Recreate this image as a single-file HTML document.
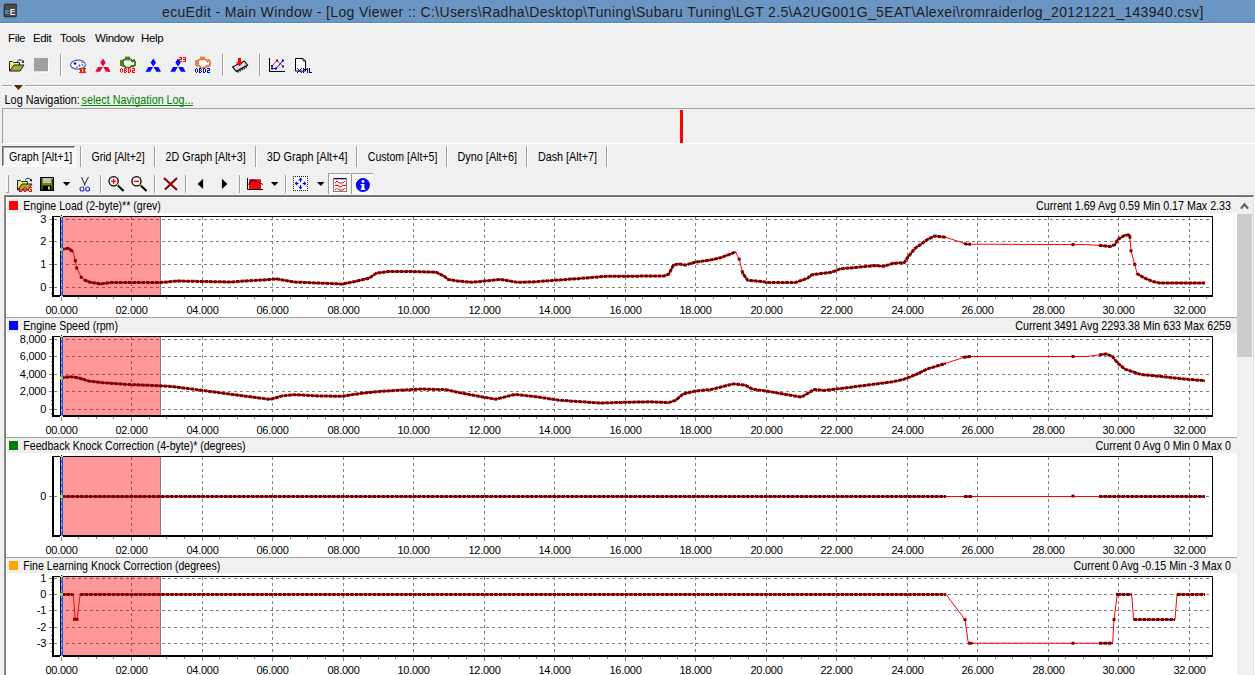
<!DOCTYPE html>
<html><head><meta charset="utf-8"><style>
html,body{margin:0;padding:0;}
body{width:1255px;height:675px;overflow:hidden;position:relative;background:#f0f0f0;font-family:"Liberation Sans", sans-serif;}
</style></head><body>
<div style="position:absolute;left:0;top:0;width:1255px;height:22px;background:#6b96c3;border-bottom:1px solid #5d86b3"></div>
<div style="position:absolute;left:0;top:23px;width:1255px;height:1px;background:#fafafa"></div>
<svg style="position:absolute;left:3px;top:3px" width="15" height="16" viewBox="0 0 15 16">
<rect x="1" y="1" width="12.5" height="13" rx="1" fill="#3c3c3c" stroke="#222" stroke-width="0.6"/>
<rect x="2" y="2" width="10.5" height="11" fill="#4a4a4a"/>
<text x="2" y="11" font-family="Liberation Sans" font-size="7.5" font-weight="bold" fill="#5ab0e0">e</text>
<text x="6.8" y="11.5" font-family="Liberation Sans" font-size="8.5" font-weight="bold" fill="#e8e8e8">E</text>
</svg>
<div style="position:absolute;left:162px;top:4px;font-size:14px;line-height:16px;white-space:nowrap;color:#1e1e1e;letter-spacing:0.35px;">ecuEdit - Main Window - [Log Viewer :: C:\Users\Radha\Desktop\Tuning\Subaru Tuning\LGT 2.5\A2UG001G_5EAT\Alexei\romraiderlog_20121221_143940.csv]</div>
<div style="position:absolute;left:8px;top:32px;font-size:11.5px;line-height:13px;white-space:nowrap;color:#000;letter-spacing:-0.35px;">File</div>
<div style="position:absolute;left:33px;top:32px;font-size:11.5px;line-height:13px;white-space:nowrap;color:#000;letter-spacing:-0.35px;">Edit</div>
<div style="position:absolute;left:60px;top:32px;font-size:11.5px;line-height:13px;white-space:nowrap;color:#000;letter-spacing:-0.35px;">Tools</div>
<div style="position:absolute;left:95px;top:32px;font-size:11.5px;line-height:13px;white-space:nowrap;color:#000;letter-spacing:-0.35px;">Window</div>
<div style="position:absolute;left:141px;top:32px;font-size:11.5px;line-height:13px;white-space:nowrap;color:#000;letter-spacing:-0.35px;">Help</div>
<svg style="position:absolute;left:0;top:0" width="1255" height="200" viewBox="0 0 1255 200">
<path d="M9.5,71 L9.5,61.5 L12.5,61.5 L13.5,62.5 L19.5,62.5 L19.5,65" fill="#ffff80" stroke="#202020" stroke-width="1"/><polygon points="10,71 10,63 19,63 19,65 14,65" fill="#f0f070"/><polygon points="9.5,71 14,65 24,65 20,71" fill="#a8a838" stroke="#202020" stroke-width="1"/>
<path d="M17,61.5 Q20,58 23,61.5" fill="none" stroke="#202020" stroke-width="1"/><polygon points="21.3,62.5 24,63 23.8,60" fill="#202020"/>
<rect x="34" y="58" width="14" height="13.5" fill="#a0a0a0"/><path d="M34.5,72 L48.5,72 L48.5,58" fill="none" stroke="#fff" stroke-width="1"/>
<rect x="60" y="54" width="1" height="22" fill="#a0a0a0"/><rect x="61" y="54" width="1" height="22" fill="#ffffff"/>
<ellipse cx="78" cy="64.7" rx="7.4" ry="4.5" fill="#fff" stroke="#4858d0" stroke-width="1.2"/>
<circle cx="75" cy="63.5" r="1.3" fill="#101870"/><circle cx="79.5" cy="65.5" r="0.9" fill="#1828a0"/><circle cx="82.5" cy="65" r="0.8" fill="#1828a0"/><circle cx="77" cy="67" r="0.8" fill="#1828a0"/><circle cx="82" cy="62.5" r="0.7" fill="#4050c0"/>
<rect x="79" y="68" width="7" height="1.2" fill="#ff1800"/><rect x="79" y="71.8" width="7" height="1.2" fill="#ff1800"/><rect x="80" y="68" width="2" height="5" fill="#ff1800"/><rect x="83.2" y="68" width="2" height="5" fill="#ff1800"/>
<polygon points="103,58.5 105.7,62.5 103,66.5 100.3,62.5" fill="#e8003c"/><polygon points="98,67.1 102.7,67.1 100,71.8 95.3,71.8" fill="#e8003c"/><polygon points="108,67.1 103.3,67.1 106,71.8 110.7,71.8" fill="#e8003c"/>
<path d="M123.5,61 L131,60.5 L132.5,62 L134.5,62 L134.5,65 L132,65.5 L130,67 L126,67 L124.5,65.5 L123.5,65.5 Z" fill="#fff"/><path d="M121,60 L121,66 M121,63 L123,63 M123,60.5 L124.5,59.5 L131,59.5 L132.5,61.5 L134,60 L135,62 L135,65 L133,66.5 L132,65.8 L130,67.5 L126,67.5 L124.5,66 L123,66 Z M125,57.6 L130,57.6 M127.5,57.6 L127.5,59.5" fill="none" stroke="#004400" stroke-width="1.6"/><path d="M121,60 L121,66 M121,63 L123,63 M123,60.5 L124.5,59.5 L131,59.5 L132.5,61.5 L134,60 L135,62 L135,65 L133,66.5 L132,65.8 L130,67.5 L126,67.5 L124.5,66 L123,66 Z M125,57.6 L130,57.6 M127.5,57.6 L127.5,59.5" fill="none" stroke="#80e000" stroke-width="0.5"/>
<rect x="121.00" y="68.00" width="1.00" height="1" fill="#ff0000"/><rect x="120.00" y="69.00" width="1.00" height="1" fill="#ff0000"/><rect x="122.00" y="69.00" width="1.00" height="1" fill="#ff0000"/><rect x="120.00" y="70.00" width="1.00" height="1" fill="#ff0000"/><rect x="122.00" y="70.00" width="1.00" height="1" fill="#ff0000"/><rect x="120.00" y="71.00" width="1.00" height="1" fill="#ff0000"/><rect x="122.00" y="71.00" width="1.00" height="1" fill="#ff0000"/><rect x="121.00" y="72.00" width="1.00" height="1" fill="#ff0000"/><rect x="124.00" y="68.00" width="1.00" height="1" fill="#ff0000"/><rect x="125.00" y="68.00" width="1.00" height="1" fill="#ff0000"/><rect x="124.00" y="69.00" width="1.00" height="1" fill="#ff0000"/><rect x="126.00" y="69.00" width="1.00" height="1" fill="#ff0000"/><rect x="124.00" y="70.00" width="1.00" height="1" fill="#ff0000"/><rect x="125.00" y="70.00" width="1.00" height="1" fill="#ff0000"/><rect x="124.00" y="71.00" width="1.00" height="1" fill="#ff0000"/><rect x="126.00" y="71.00" width="1.00" height="1" fill="#ff0000"/><rect x="124.00" y="72.00" width="1.00" height="1" fill="#ff0000"/><rect x="125.00" y="72.00" width="1.00" height="1" fill="#ff0000"/><rect x="128.00" y="68.00" width="1.00" height="1" fill="#ff0000"/><rect x="129.00" y="68.00" width="1.00" height="1" fill="#ff0000"/><rect x="128.00" y="69.00" width="1.00" height="1" fill="#ff0000"/><rect x="130.00" y="69.00" width="1.00" height="1" fill="#ff0000"/><rect x="128.00" y="70.00" width="1.00" height="1" fill="#ff0000"/><rect x="130.00" y="70.00" width="1.00" height="1" fill="#ff0000"/><rect x="128.00" y="71.00" width="1.00" height="1" fill="#ff0000"/><rect x="130.00" y="71.00" width="1.00" height="1" fill="#ff0000"/><rect x="128.00" y="72.00" width="1.00" height="1" fill="#ff0000"/><rect x="129.00" y="72.00" width="1.00" height="1" fill="#ff0000"/><rect x="132.00" y="68.00" width="1.00" height="1" fill="#ff0000"/><rect x="133.00" y="68.00" width="1.00" height="1" fill="#ff0000"/><rect x="134.00" y="68.00" width="1.00" height="1" fill="#ff0000"/><rect x="134.00" y="69.00" width="1.00" height="1" fill="#ff0000"/><rect x="132.00" y="70.00" width="1.00" height="1" fill="#ff0000"/><rect x="133.00" y="70.00" width="1.00" height="1" fill="#ff0000"/><rect x="134.00" y="70.00" width="1.00" height="1" fill="#ff0000"/><rect x="132.00" y="71.00" width="1.00" height="1" fill="#ff0000"/><rect x="132.00" y="72.00" width="1.00" height="1" fill="#ff0000"/><rect x="133.00" y="72.00" width="1.00" height="1" fill="#ff0000"/><rect x="134.00" y="72.00" width="1.00" height="1" fill="#ff0000"/>
<polygon points="153.3,58.5 156.0,62.5 153.3,66.5 150.60000000000002,62.5" fill="#0000ff"/><polygon points="148.3,67.1 153.0,67.1 150.3,71.8 145.60000000000002,71.8" fill="#0000ff"/><polygon points="158.3,67.1 153.60000000000002,67.1 156.3,71.8 161.0,71.8" fill="#0000ff"/>
<polygon points="178,58.5 180.7,62.5 178,66.5 175.3,62.5" fill="#0000ff"/><polygon points="173,67.1 177.7,67.1 175,71.8 170.3,71.8" fill="#0000ff"/><polygon points="183,67.1 178.3,67.1 181,71.8 185.7,71.8" fill="#0000ff"/>
<rect x="179.00" y="57.00" width="1.00" height="1" fill="#ff0000"/><rect x="180.00" y="57.00" width="1.00" height="1" fill="#ff0000"/><rect x="181.00" y="57.00" width="1.00" height="1" fill="#ff0000"/><rect x="181.00" y="58.00" width="1.00" height="1" fill="#ff0000"/><rect x="179.00" y="59.00" width="1.00" height="1" fill="#ff0000"/><rect x="180.00" y="59.00" width="1.00" height="1" fill="#ff0000"/><rect x="181.00" y="59.00" width="1.00" height="1" fill="#ff0000"/><rect x="179.00" y="60.00" width="1.00" height="1" fill="#ff0000"/><rect x="179.00" y="61.00" width="1.00" height="1" fill="#ff0000"/><rect x="180.00" y="61.00" width="1.00" height="1" fill="#ff0000"/><rect x="181.00" y="61.00" width="1.00" height="1" fill="#ff0000"/><rect x="183.00" y="57.00" width="1.00" height="1" fill="#ff0000"/><rect x="184.00" y="57.00" width="1.00" height="1" fill="#ff0000"/><rect x="185.00" y="57.00" width="1.00" height="1" fill="#ff0000"/><rect x="185.00" y="58.00" width="1.00" height="1" fill="#ff0000"/><rect x="183.00" y="59.00" width="1.00" height="1" fill="#ff0000"/><rect x="184.00" y="59.00" width="1.00" height="1" fill="#ff0000"/><rect x="185.00" y="59.00" width="1.00" height="1" fill="#ff0000"/><rect x="185.00" y="60.00" width="1.00" height="1" fill="#ff0000"/><rect x="183.00" y="61.00" width="1.00" height="1" fill="#ff0000"/><rect x="184.00" y="61.00" width="1.00" height="1" fill="#ff0000"/><rect x="185.00" y="61.00" width="1.00" height="1" fill="#ff0000"/>
<path d="M198.5,61 L206,60.5 L207.5,62 L209.5,62 L209.5,65 L207,65.5 L205,67 L201,67 L199.5,65.5 L198.5,65.5 Z" fill="#fff"/><path d="M196,60 L196,66 M196,63 L198,63 M198,60.5 L199.5,59.5 L206,59.5 L207.5,61.5 L209,60 L210,62 L210,65 L208,66.5 L207,65.8 L205,67.5 L201,67.5 L199.5,66 L198,66 Z M200,57.6 L205,57.6 M202.5,57.6 L202.5,59.5" fill="none" stroke="#e06838" stroke-width="1.6"/><path d="M196,60 L196,66 M196,63 L198,63 M198,60.5 L199.5,59.5 L206,59.5 L207.5,61.5 L209,60 L210,62 L210,65 L208,66.5 L207,65.8 L205,67.5 L201,67.5 L199.5,66 L198,66 Z M200,57.6 L205,57.6 M202.5,57.6 L202.5,59.5" fill="none" stroke="#e88050" stroke-width="0.5"/>
<rect x="196.00" y="68.00" width="1.00" height="1" fill="#0000ff"/><rect x="195.00" y="69.00" width="1.00" height="1" fill="#0000ff"/><rect x="197.00" y="69.00" width="1.00" height="1" fill="#0000ff"/><rect x="195.00" y="70.00" width="1.00" height="1" fill="#0000ff"/><rect x="197.00" y="70.00" width="1.00" height="1" fill="#0000ff"/><rect x="195.00" y="71.00" width="1.00" height="1" fill="#0000ff"/><rect x="197.00" y="71.00" width="1.00" height="1" fill="#0000ff"/><rect x="196.00" y="72.00" width="1.00" height="1" fill="#0000ff"/><rect x="199.00" y="68.00" width="1.00" height="1" fill="#0000ff"/><rect x="200.00" y="68.00" width="1.00" height="1" fill="#0000ff"/><rect x="199.00" y="69.00" width="1.00" height="1" fill="#0000ff"/><rect x="201.00" y="69.00" width="1.00" height="1" fill="#0000ff"/><rect x="199.00" y="70.00" width="1.00" height="1" fill="#0000ff"/><rect x="200.00" y="70.00" width="1.00" height="1" fill="#0000ff"/><rect x="199.00" y="71.00" width="1.00" height="1" fill="#0000ff"/><rect x="201.00" y="71.00" width="1.00" height="1" fill="#0000ff"/><rect x="199.00" y="72.00" width="1.00" height="1" fill="#0000ff"/><rect x="200.00" y="72.00" width="1.00" height="1" fill="#0000ff"/><rect x="203.00" y="68.00" width="1.00" height="1" fill="#0000ff"/><rect x="204.00" y="68.00" width="1.00" height="1" fill="#0000ff"/><rect x="203.00" y="69.00" width="1.00" height="1" fill="#0000ff"/><rect x="205.00" y="69.00" width="1.00" height="1" fill="#0000ff"/><rect x="203.00" y="70.00" width="1.00" height="1" fill="#0000ff"/><rect x="205.00" y="70.00" width="1.00" height="1" fill="#0000ff"/><rect x="203.00" y="71.00" width="1.00" height="1" fill="#0000ff"/><rect x="205.00" y="71.00" width="1.00" height="1" fill="#0000ff"/><rect x="203.00" y="72.00" width="1.00" height="1" fill="#0000ff"/><rect x="204.00" y="72.00" width="1.00" height="1" fill="#0000ff"/><rect x="207.00" y="68.00" width="1.00" height="1" fill="#0000ff"/><rect x="208.00" y="68.00" width="1.00" height="1" fill="#0000ff"/><rect x="209.00" y="68.00" width="1.00" height="1" fill="#0000ff"/><rect x="209.00" y="69.00" width="1.00" height="1" fill="#0000ff"/><rect x="207.00" y="70.00" width="1.00" height="1" fill="#0000ff"/><rect x="208.00" y="70.00" width="1.00" height="1" fill="#0000ff"/><rect x="209.00" y="70.00" width="1.00" height="1" fill="#0000ff"/><rect x="207.00" y="71.00" width="1.00" height="1" fill="#0000ff"/><rect x="207.00" y="72.00" width="1.00" height="1" fill="#0000ff"/><rect x="208.00" y="72.00" width="1.00" height="1" fill="#0000ff"/><rect x="209.00" y="72.00" width="1.00" height="1" fill="#0000ff"/>
<rect x="222" y="54" width="1" height="22" fill="#a0a0a0"/><rect x="223" y="54" width="1" height="22" fill="#ffffff"/>
<polygon points="232.5,67 244.2,61.2 247.6,65 236.4,71.5" fill="#c0c0c0" stroke="#000" stroke-width="1.1"/>
<polygon points="234,67 244,62 246,64.5 237,69.5" fill="#e0e0e0"/>
<path d="M238,70.6 l0.3,2" stroke="#000" stroke-width="1.1"/><path d="M240,69.5 l0.3,2" stroke="#000" stroke-width="1.1"/><path d="M242,68.39999999999999 l0.3,2" stroke="#000" stroke-width="1.1"/><path d="M244,67.3 l0.3,2" stroke="#000" stroke-width="1.1"/><path d="M246,66.19999999999999 l0.3,2" stroke="#000" stroke-width="1.1"/>
<polygon points="238,58 241,58 241,62.5 243.2,62.5 239.5,66.3 235.8,62.5 238,62.5" fill="#ff0000"/>
<rect x="259" y="54" width="1" height="22" fill="#a0a0a0"/><rect x="260" y="54" width="1" height="22" fill="#ffffff"/>
<path d="M269.5,58 V71.5 H285" fill="none" stroke="#000" stroke-width="1"/>
<polyline points="272,66 277,60.5 283,66.5" fill="none" stroke="#800080" stroke-width="0.8"/><rect x="271" y="65" width="2" height="2" fill="#800000"/><rect x="276" y="59.5" width="2" height="2" fill="#800000"/><rect x="282" y="65.5" width="2" height="2" fill="#800000"/>
<polyline points="272,68.5 276,68.5 283,60.5" fill="none" stroke="#0000ff" stroke-width="1"/><rect x="271" y="67.5" width="2" height="2" fill="#0000ff"/><rect x="275" y="67.5" width="2" height="2" fill="#0000ff"/><rect x="282" y="59.5" width="2" height="2" fill="#0000ff"/>
<path d="M295.5,58.5 H303 L305.5,61 V71 H295.5 Z" fill="#fff" stroke="#000" stroke-width="1"/><path d="M303,58.5 V61 H305.5" fill="none" stroke="#000" stroke-width="0.8"/>
<rect x="297.00" y="68.00" width="1.00" height="1" fill="#000090"/><rect x="301.00" y="68.00" width="1.00" height="1" fill="#000090"/><rect x="298.00" y="69.00" width="1.00" height="1" fill="#000090"/><rect x="300.00" y="69.00" width="1.00" height="1" fill="#000090"/><rect x="299.00" y="70.00" width="1.00" height="1" fill="#000090"/><rect x="298.00" y="71.00" width="1.00" height="1" fill="#000090"/><rect x="300.00" y="71.00" width="1.00" height="1" fill="#000090"/><rect x="297.00" y="72.00" width="1.00" height="1" fill="#000090"/><rect x="301.00" y="72.00" width="1.00" height="1" fill="#000090"/><rect x="303.00" y="68.00" width="1.00" height="1" fill="#000090"/><rect x="307.00" y="68.00" width="1.00" height="1" fill="#000090"/><rect x="303.00" y="69.00" width="1.00" height="1" fill="#000090"/><rect x="304.00" y="69.00" width="1.00" height="1" fill="#000090"/><rect x="306.00" y="69.00" width="1.00" height="1" fill="#000090"/><rect x="307.00" y="69.00" width="1.00" height="1" fill="#000090"/><rect x="303.00" y="70.00" width="1.00" height="1" fill="#000090"/><rect x="305.00" y="70.00" width="1.00" height="1" fill="#000090"/><rect x="307.00" y="70.00" width="1.00" height="1" fill="#000090"/><rect x="303.00" y="71.00" width="1.00" height="1" fill="#000090"/><rect x="307.00" y="71.00" width="1.00" height="1" fill="#000090"/><rect x="303.00" y="72.00" width="1.00" height="1" fill="#000090"/><rect x="307.00" y="72.00" width="1.00" height="1" fill="#000090"/><rect x="309.00" y="68.00" width="1.00" height="1" fill="#000090"/><rect x="309.00" y="69.00" width="1.00" height="1" fill="#000090"/><rect x="309.00" y="70.00" width="1.00" height="1" fill="#000090"/><rect x="309.00" y="71.00" width="1.00" height="1" fill="#000090"/><rect x="309.00" y="72.00" width="1.00" height="1" fill="#000090"/><rect x="310.00" y="72.00" width="1.00" height="1" fill="#000090"/><rect x="311.00" y="72.00" width="1.00" height="1" fill="#000090"/>
<rect x="2" y="85" width="10" height="1" fill="#a0a0a0"/><rect x="2" y="86" width="10" height="1" fill="#fff"/>
<rect x="25" y="85" width="1230" height="1" fill="#a0a0a0"/><rect x="25" y="86" width="1230" height="1" fill="#fff"/>
<polygon points="13.8,85 23,85 18.4,90" fill="#6a1e00"/>
<rect x="2" y="108" width="1253" height="1" fill="#a0a0a0"/><rect x="2" y="108" width="1" height="35" fill="#a0a0a0"/><rect x="2" y="143" width="1253" height="1" fill="#ffffff"/>
<rect x="680" y="110" width="3" height="33" fill="#ff0000"/>
<defs><pattern id="dith" width="2" height="2" patternUnits="userSpaceOnUse"><rect width="2" height="2" fill="#ffffff"/><rect width="1" height="1" fill="#f0f0f0"/><rect x="1" y="1" width="1" height="1" fill="#f0f0f0"/></pattern></defs>
<rect x="2" y="146" width="73" height="20" fill="url(#dith)"/>
<rect x="2" y="146" width="73" height="1" fill="#696969"/><rect x="2" y="147" width="72" height="1" fill="#a0a0a0"/><rect x="2" y="146" width="1" height="20" fill="#696969"/><rect x="3" y="147" width="1" height="18" fill="#a0a0a0"/><rect x="2" y="166" width="74" height="1" fill="#fff"/><rect x="75" y="146" width="1" height="21" fill="#fff"/>
<rect x="80" y="146" width="1" height="21" fill="#a0a0a0"/><rect x="81" y="146" width="1" height="21" fill="#fff"/>
<rect x="154" y="146" width="1" height="21" fill="#a0a0a0"/><rect x="155" y="146" width="1" height="21" fill="#fff"/>
<rect x="255" y="146" width="1" height="21" fill="#a0a0a0"/><rect x="256" y="146" width="1" height="21" fill="#fff"/>
<rect x="356" y="146" width="1" height="21" fill="#a0a0a0"/><rect x="357" y="146" width="1" height="21" fill="#fff"/>
<rect x="446" y="146" width="1" height="21" fill="#a0a0a0"/><rect x="447" y="146" width="1" height="21" fill="#fff"/>
<rect x="526" y="146" width="1" height="21" fill="#a0a0a0"/><rect x="527" y="146" width="1" height="21" fill="#fff"/>
<rect x="606" y="146" width="1" height="21" fill="#a0a0a0"/><rect x="607" y="146" width="1" height="21" fill="#fff"/>
<rect x="6" y="175" width="1" height="18" fill="#fff"/><rect x="8" y="175" width="1" height="18" fill="#a0a0a0"/><rect x="6" y="192" width="3" height="1" fill="#a0a0a0"/>
<path d="M17.5,190 L17.5,180.5 L20.5,180.5 L21.5,181.5 L27.5,181.5 L27.5,184" fill="#ffff80" stroke="#202020" stroke-width="1"/><polygon points="18,190 18,182 27,182 27,184 22,184" fill="#f0f070"/><polygon points="17.5,190 22,184 32,184 28,190" fill="#a8a838" stroke="#202020" stroke-width="1"/>
<path d="M25,180.0 Q28,176.5 31,180.0" fill="none" stroke="#202020" stroke-width="1"/><polygon points="29.3,181.0 32,181.5 31.8,178.5" fill="#202020"/>
<rect x="19.00" y="187.00" width="1.00" height="1" fill="#ff0000"/><rect x="19.00" y="188.00" width="1.00" height="1" fill="#ff0000"/><rect x="19.00" y="189.00" width="1.00" height="1" fill="#ff0000"/><rect x="19.00" y="190.00" width="1.00" height="1" fill="#ff0000"/><rect x="19.00" y="191.00" width="1.00" height="1" fill="#ff0000"/><rect x="20.00" y="191.00" width="1.00" height="1" fill="#ff0000"/><rect x="21.00" y="191.00" width="1.00" height="1" fill="#ff0000"/><rect x="24.00" y="187.00" width="1.00" height="1" fill="#ff0000"/><rect x="25.00" y="187.00" width="1.00" height="1" fill="#ff0000"/><rect x="23.00" y="188.00" width="1.00" height="1" fill="#ff0000"/><rect x="26.00" y="188.00" width="1.00" height="1" fill="#ff0000"/><rect x="23.00" y="189.00" width="1.00" height="1" fill="#ff0000"/><rect x="26.00" y="189.00" width="1.00" height="1" fill="#ff0000"/><rect x="23.00" y="190.00" width="1.00" height="1" fill="#ff0000"/><rect x="26.00" y="190.00" width="1.00" height="1" fill="#ff0000"/><rect x="24.00" y="191.00" width="1.00" height="1" fill="#ff0000"/><rect x="25.00" y="191.00" width="1.00" height="1" fill="#ff0000"/><rect x="29.00" y="187.00" width="1.00" height="1" fill="#ff0000"/><rect x="30.00" y="187.00" width="1.00" height="1" fill="#ff0000"/><rect x="31.00" y="187.00" width="1.00" height="1" fill="#ff0000"/><rect x="28.00" y="188.00" width="1.00" height="1" fill="#ff0000"/><rect x="28.00" y="189.00" width="1.00" height="1" fill="#ff0000"/><rect x="30.00" y="189.00" width="1.00" height="1" fill="#ff0000"/><rect x="31.00" y="189.00" width="1.00" height="1" fill="#ff0000"/><rect x="28.00" y="190.00" width="1.00" height="1" fill="#ff0000"/><rect x="31.00" y="190.00" width="1.00" height="1" fill="#ff0000"/><rect x="29.00" y="191.00" width="1.00" height="1" fill="#ff0000"/><rect x="30.00" y="191.00" width="1.00" height="1" fill="#ff0000"/><rect x="31.00" y="191.00" width="1.00" height="1" fill="#ff0000"/>
<rect x="40" y="177" width="14" height="14" fill="#000"/><rect x="41.5" y="178" width="11" height="12" fill="#808000"/><rect x="43" y="178" width="8" height="5" fill="#c0c0c0"/><rect x="42.5" y="185.5" width="9" height="5" fill="#000"/><rect x="48" y="186.5" width="2" height="3" fill="#c0c0c0"/><rect x="52" y="178" width="1" height="1" fill="#c0c0c0"/>
<polygon points="62.8,182 70.3,182 66.55,186" fill="#000"/>
<path d="M81.5,177 L85,185.5 M88.5,177 L84,185.5" stroke="#202020" stroke-width="1" fill="none"/><circle cx="82" cy="189" r="2" fill="none" stroke="#3030d0" stroke-width="1.1"/><circle cx="87.6" cy="189" r="2" fill="none" stroke="#3030d0" stroke-width="1.1"/>
<rect x="100" y="175" width="1" height="18" fill="#a0a0a0"/><rect x="101" y="175" width="1" height="18" fill="#ffffff"/>
<circle cx="113.6" cy="181.3" r="4.6" fill="#f4f4f4" stroke="#000" stroke-width="1.3"/>
<path d="M116.8,184.5 L123.6,191.0" stroke="#000" stroke-width="2"/>
<path d="M116.8,184.5 L118.0,185.70000000000002" stroke="#e0e000" stroke-width="1.4"/>
<rect x="111.1" y="180.7" width="5" height="1.3" fill="#ff0000"/>
<rect x="112.94999999999999" y="178.8" width="1.3" height="5" fill="#ff0000"/>
<circle cx="136.5" cy="181.3" r="4.6" fill="#f4f4f4" stroke="#000" stroke-width="1.3"/>
<path d="M139.7,184.5 L146.5,191.0" stroke="#000" stroke-width="2"/>
<path d="M139.7,184.5 L140.9,185.70000000000002" stroke="#e0e000" stroke-width="1.4"/>
<rect x="134.0" y="180.7" width="5" height="1.3" fill="#ff0000"/>
<rect x="154" y="175" width="1" height="18" fill="#a0a0a0"/><rect x="155" y="175" width="1" height="18" fill="#ffffff"/>
<path d="M164,178 L177,190 M177,178 L165,189.5" stroke="#800000" stroke-width="2"/>
<rect x="185" y="175" width="1" height="18" fill="#a0a0a0"/><rect x="186" y="175" width="1" height="18" fill="#ffffff"/>
<polygon points="197.6,184 203.1,178.8 203.1,189.1" fill="#000"/><polygon points="221.9,178.8 221.9,189.1 227.4,184" fill="#000"/>
<rect x="239" y="175" width="1" height="18" fill="#a0a0a0"/><rect x="240" y="175" width="1" height="18" fill="#ffffff"/>
<rect x="248" y="178" width="15" height="11.5" fill="#fff"/><rect x="249" y="179.2" width="12" height="10" fill="#ff0000"/><path d="M247.5,178 V189.5 H263" fill="none" stroke="#000" stroke-width="1"/><polyline points="248,184.5 250,183 252,180 254,180 257,182 260,183 263,184.5" fill="none" stroke="#000080" stroke-width="1"/>
<polygon points="270.9,182 278.4,182 274.65,186" fill="#000"/>
<rect x="285" y="175" width="1" height="18" fill="#a0a0a0"/><rect x="286" y="175" width="1" height="18" fill="#ffffff"/>
<rect x="294" y="177" width="13" height="13" fill="#fff"/>
<rect x="293" y="176" width="1" height="1" fill="#202020"/><rect x="293" y="190" width="1" height="1" fill="#202020"/><rect x="293" y="176" width="1" height="1" fill="#202020"/><rect x="307" y="176" width="1" height="1" fill="#202020"/>
<rect x="295" y="176" width="1" height="1" fill="#202020"/><rect x="295" y="190" width="1" height="1" fill="#202020"/><rect x="293" y="178" width="1" height="1" fill="#202020"/><rect x="307" y="178" width="1" height="1" fill="#202020"/>
<rect x="297" y="176" width="1" height="1" fill="#202020"/><rect x="297" y="190" width="1" height="1" fill="#202020"/><rect x="293" y="180" width="1" height="1" fill="#202020"/><rect x="307" y="180" width="1" height="1" fill="#202020"/>
<rect x="299" y="176" width="1" height="1" fill="#202020"/><rect x="299" y="190" width="1" height="1" fill="#202020"/><rect x="293" y="182" width="1" height="1" fill="#202020"/><rect x="307" y="182" width="1" height="1" fill="#202020"/>
<rect x="301" y="176" width="1" height="1" fill="#202020"/><rect x="301" y="190" width="1" height="1" fill="#202020"/><rect x="293" y="184" width="1" height="1" fill="#202020"/><rect x="307" y="184" width="1" height="1" fill="#202020"/>
<rect x="303" y="176" width="1" height="1" fill="#202020"/><rect x="303" y="190" width="1" height="1" fill="#202020"/><rect x="293" y="186" width="1" height="1" fill="#202020"/><rect x="307" y="186" width="1" height="1" fill="#202020"/>
<rect x="305" y="176" width="1" height="1" fill="#202020"/><rect x="305" y="190" width="1" height="1" fill="#202020"/><rect x="293" y="188" width="1" height="1" fill="#202020"/><rect x="307" y="188" width="1" height="1" fill="#202020"/>
<rect x="307" y="176" width="1" height="1" fill="#202020"/><rect x="307" y="190" width="1" height="1" fill="#202020"/><rect x="293" y="190" width="1" height="1" fill="#202020"/><rect x="307" y="190" width="1" height="1" fill="#202020"/>
<path d="M300.5,179.5 V182 M300.5,185 V187.5 M296,183.5 H298.5 M302.5,183.5 H305" stroke="#0000ff" stroke-width="1"/>
<polygon points="298.3,180.2 300.5,177.6 302.7,180.2" fill="#0000ff"/><polygon points="298.3,186.8 300.5,189.4 302.7,186.8" fill="#0000ff"/><polygon points="297.2,181.3 294.6,183.5 297.2,185.7" fill="#0000ff"/><polygon points="303.8,181.3 306.4,183.5 303.8,185.7" fill="#0000ff"/>
<polygon points="317,182 324.5,182 320.75,186" fill="#000"/>
<rect x="328" y="173" width="22" height="21" fill="url(#dith)"/><rect x="328" y="173" width="22" height="1" fill="#a0a0a0"/><rect x="328" y="173" width="1" height="21" fill="#a0a0a0"/>
<rect x="351" y="173" width="22" height="21" fill="url(#dith)"/><rect x="351" y="173" width="22" height="1" fill="#a0a0a0"/><rect x="351" y="173" width="1" height="21" fill="#a0a0a0"/>
<rect x="333.5" y="178.5" width="13" height="13" fill="#fff" stroke="#808080" stroke-width="1"/><rect x="334" y="178" width="12" height="1.3" fill="#000080"/>
<polyline points="335,183 337,181 339,183 343,183 345,181" fill="none" stroke="#ff0000" stroke-width="1"/><polyline points="335,185.5 338,185.5 340,187 343,185.5 346,185.5" fill="none" stroke="#ff0000" stroke-width="1"/><polyline points="335,190 337,188 339,190 343,190 345,188" fill="none" stroke="#ff0000" stroke-width="1"/>
<path d="M335,184.2 H346 M335,188.7 H346" stroke="#c0c0c0" stroke-width="0.6"/>
<circle cx="362.9" cy="185.1" r="7" fill="#0000ff"/><rect x="361.6" y="184" width="2.8" height="5.5" fill="#fff"/><rect x="360.6" y="184" width="2" height="1" fill="#fff"/><rect x="360.6" y="188.6" width="4.8" height="1.2" fill="#fff"/><circle cx="363" cy="181.5" r="1.4" fill="#fff"/>
</svg>
<svg style="position:absolute;left:0;top:0" width="1255" height="200" viewBox="0 0 1255 200" font-family="Liberation Sans, sans-serif">
<text transform="translate(4.6,104) scale(0.904,1)" font-size="12">Log Navigation:</text>
<text transform="translate(81.5,104) scale(0.899,1)" font-size="12" fill="#008000">select Navigation Log...</text>
<rect x="81" y="105" width="112" height="1" fill="#008000"/>
<text transform="translate(9.0,161) scale(0.893,1)" font-size="12">Graph [Alt+1]</text>
<text transform="translate(91.5,161) scale(0.881,1)" font-size="12">Grid [Alt+2]</text>
<text transform="translate(165.6,161) scale(0.895,1)" font-size="12">2D Graph [Alt+3]</text>
<text transform="translate(266.7,161) scale(0.901,1)" font-size="12">3D Graph [Alt+4]</text>
<text transform="translate(367.8,161) scale(0.88,1)" font-size="12">Custom [Alt+5]</text>
<text transform="translate(457.5,161) scale(0.906,1)" font-size="12">Dyno [Alt+6]</text>
<text transform="translate(537.9000000000001,161) scale(0.9,1)" font-size="12">Dash [Alt+7]</text>
</svg>
<svg style="position:absolute;left:0;top:0" width="1255" height="675" viewBox="0 0 1255 675" font-family="Liberation Sans, sans-serif">
<rect x="6" y="197" width="1231" height="478" fill="#fff"/>
<rect x="4" y="195" width="1250" height="1" fill="#7f7f7f"/><rect x="5" y="196" width="1248" height="1" fill="#696969"/>
<rect x="4" y="195" width="1" height="480" fill="#8f8f8f"/><rect x="5" y="196" width="1" height="479" fill="#7a7a7a"/>
<rect x="1254" y="195" width="1" height="480" fill="#fff"/><rect x="1253" y="196" width="1" height="479" fill="#e3e3e3"/>
<rect x="1237" y="197" width="16" height="478" fill="#f0f0f0"/>
<rect x="1237" y="214" width="15" height="143" fill="#cdcdcd"/>
<polyline points="1241,208.6 1244.5,204.3 1248,208.6" fill="none" stroke="#606060" stroke-width="2.2"/>
<rect x="7" y="198" width="1230" height="15" fill="#f0f0f0"/>
<rect x="9" y="201" width="9" height="9" fill="#ff0000"/>
<text transform="translate(23.3,210) scale(0.883,1)" font-size="12">Engine Load (2-byte)** (grev)</text>
<text transform="translate(1231,210) scale(0.893,1)" font-size="12" text-anchor="end">Current 1.69 Avg 0.59 Min 0.17 Max 2.33</text>
<line x1="61.5" y1="217" x2="61.5" y2="295" stroke="#808080" stroke-dasharray="3,3"/>
<line x1="131.5" y1="217" x2="131.5" y2="295" stroke="#808080" stroke-dasharray="3,3"/>
<line x1="202.5" y1="217" x2="202.5" y2="295" stroke="#808080" stroke-dasharray="3,3"/>
<line x1="272.5" y1="217" x2="272.5" y2="295" stroke="#808080" stroke-dasharray="3,3"/>
<line x1="343.5" y1="217" x2="343.5" y2="295" stroke="#808080" stroke-dasharray="3,3"/>
<line x1="413.5" y1="217" x2="413.5" y2="295" stroke="#808080" stroke-dasharray="3,3"/>
<line x1="484.5" y1="217" x2="484.5" y2="295" stroke="#808080" stroke-dasharray="3,3"/>
<line x1="554.5" y1="217" x2="554.5" y2="295" stroke="#808080" stroke-dasharray="3,3"/>
<line x1="625.5" y1="217" x2="625.5" y2="295" stroke="#808080" stroke-dasharray="3,3"/>
<line x1="695.5" y1="217" x2="695.5" y2="295" stroke="#808080" stroke-dasharray="3,3"/>
<line x1="766.5" y1="217" x2="766.5" y2="295" stroke="#808080" stroke-dasharray="3,3"/>
<line x1="836.5" y1="217" x2="836.5" y2="295" stroke="#808080" stroke-dasharray="3,3"/>
<line x1="907.5" y1="217" x2="907.5" y2="295" stroke="#808080" stroke-dasharray="3,3"/>
<line x1="977.5" y1="217" x2="977.5" y2="295" stroke="#808080" stroke-dasharray="3,3"/>
<line x1="1048.5" y1="217" x2="1048.5" y2="295" stroke="#808080" stroke-dasharray="3,3"/>
<line x1="1118.5" y1="217" x2="1118.5" y2="295" stroke="#808080" stroke-dasharray="3,3"/>
<line x1="1189.5" y1="217" x2="1189.5" y2="295" stroke="#808080" stroke-dasharray="3,3"/>
<line x1="54" y1="219.5" x2="1212" y2="219.5" stroke="#808080" stroke-dasharray="3,3"/>
<rect x="49" y="219" width="3" height="1" fill="#808080"/>
<text x="46" y="223" font-size="11" letter-spacing="-0.28" text-anchor="end">3</text>
<line x1="54" y1="241.5" x2="1212" y2="241.5" stroke="#808080" stroke-dasharray="3,3"/>
<rect x="49" y="241" width="3" height="1" fill="#808080"/>
<text x="46" y="245" font-size="11" letter-spacing="-0.28" text-anchor="end">2</text>
<line x1="54" y1="264.5" x2="1212" y2="264.5" stroke="#808080" stroke-dasharray="3,3"/>
<rect x="49" y="264" width="3" height="1" fill="#808080"/>
<text x="46" y="268" font-size="11" letter-spacing="-0.28" text-anchor="end">1</text>
<line x1="54" y1="287.5" x2="1212" y2="287.5" stroke="#808080" stroke-dasharray="3,3"/>
<rect x="49" y="287" width="3" height="1" fill="#808080"/>
<text x="46" y="291" font-size="11" letter-spacing="-0.28" text-anchor="end">0</text>
<rect x="51" y="224" width="1" height="1" fill="#808080"/>
<rect x="51" y="230" width="1" height="1" fill="#808080"/>
<rect x="51" y="236" width="1" height="1" fill="#808080"/>
<rect x="51" y="247" width="1" height="1" fill="#808080"/>
<rect x="51" y="253" width="1" height="1" fill="#808080"/>
<rect x="51" y="258" width="1" height="1" fill="#808080"/>
<rect x="51" y="270" width="1" height="1" fill="#808080"/>
<rect x="51" y="276" width="1" height="1" fill="#808080"/>
<rect x="51" y="281" width="1" height="1" fill="#808080"/>
<rect x="51" y="293" width="1" height="1" fill="#808080"/>
<rect x="63" y="217" width="97" height="78" fill="rgba(255,0,0,0.4)"/>
<rect x="160" y="217" width="1" height="78" fill="#808080"/>
<rect x="52" y="216" width="1161" height="1" fill="#000"/>
<rect x="52" y="216" width="2" height="81" fill="#000"/>
<rect x="52" y="295" width="1161" height="2" fill="#000"/>
<rect x="1212" y="216" width="1" height="81" fill="#000"/>
<rect x="61" y="297" width="1" height="4" fill="#808080"/>
<rect x="78" y="297" width="1" height="2" fill="#808080"/>
<rect x="96" y="297" width="1" height="2" fill="#808080"/>
<rect x="113" y="297" width="1" height="2" fill="#808080"/>
<rect x="131" y="297" width="1" height="4" fill="#808080"/>
<rect x="149" y="297" width="1" height="2" fill="#808080"/>
<rect x="166" y="297" width="1" height="2" fill="#808080"/>
<rect x="184" y="297" width="1" height="2" fill="#808080"/>
<rect x="202" y="297" width="1" height="4" fill="#808080"/>
<rect x="219" y="297" width="1" height="2" fill="#808080"/>
<rect x="237" y="297" width="1" height="2" fill="#808080"/>
<rect x="254" y="297" width="1" height="2" fill="#808080"/>
<rect x="272" y="297" width="1" height="4" fill="#808080"/>
<rect x="290" y="297" width="1" height="2" fill="#808080"/>
<rect x="307" y="297" width="1" height="2" fill="#808080"/>
<rect x="325" y="297" width="1" height="2" fill="#808080"/>
<rect x="343" y="297" width="1" height="4" fill="#808080"/>
<rect x="360" y="297" width="1" height="2" fill="#808080"/>
<rect x="378" y="297" width="1" height="2" fill="#808080"/>
<rect x="395" y="297" width="1" height="2" fill="#808080"/>
<rect x="413" y="297" width="1" height="4" fill="#808080"/>
<rect x="431" y="297" width="1" height="2" fill="#808080"/>
<rect x="448" y="297" width="1" height="2" fill="#808080"/>
<rect x="466" y="297" width="1" height="2" fill="#808080"/>
<rect x="484" y="297" width="1" height="4" fill="#808080"/>
<rect x="501" y="297" width="1" height="2" fill="#808080"/>
<rect x="519" y="297" width="1" height="2" fill="#808080"/>
<rect x="536" y="297" width="1" height="2" fill="#808080"/>
<rect x="554" y="297" width="1" height="4" fill="#808080"/>
<rect x="572" y="297" width="1" height="2" fill="#808080"/>
<rect x="589" y="297" width="1" height="2" fill="#808080"/>
<rect x="607" y="297" width="1" height="2" fill="#808080"/>
<rect x="625" y="297" width="1" height="4" fill="#808080"/>
<rect x="642" y="297" width="1" height="2" fill="#808080"/>
<rect x="660" y="297" width="1" height="2" fill="#808080"/>
<rect x="677" y="297" width="1" height="2" fill="#808080"/>
<rect x="695" y="297" width="1" height="4" fill="#808080"/>
<rect x="713" y="297" width="1" height="2" fill="#808080"/>
<rect x="730" y="297" width="1" height="2" fill="#808080"/>
<rect x="748" y="297" width="1" height="2" fill="#808080"/>
<rect x="766" y="297" width="1" height="4" fill="#808080"/>
<rect x="783" y="297" width="1" height="2" fill="#808080"/>
<rect x="801" y="297" width="1" height="2" fill="#808080"/>
<rect x="818" y="297" width="1" height="2" fill="#808080"/>
<rect x="836" y="297" width="1" height="4" fill="#808080"/>
<rect x="854" y="297" width="1" height="2" fill="#808080"/>
<rect x="871" y="297" width="1" height="2" fill="#808080"/>
<rect x="889" y="297" width="1" height="2" fill="#808080"/>
<rect x="907" y="297" width="1" height="4" fill="#808080"/>
<rect x="924" y="297" width="1" height="2" fill="#808080"/>
<rect x="942" y="297" width="1" height="2" fill="#808080"/>
<rect x="959" y="297" width="1" height="2" fill="#808080"/>
<rect x="977" y="297" width="1" height="4" fill="#808080"/>
<rect x="995" y="297" width="1" height="2" fill="#808080"/>
<rect x="1012" y="297" width="1" height="2" fill="#808080"/>
<rect x="1030" y="297" width="1" height="2" fill="#808080"/>
<rect x="1048" y="297" width="1" height="4" fill="#808080"/>
<rect x="1065" y="297" width="1" height="2" fill="#808080"/>
<rect x="1083" y="297" width="1" height="2" fill="#808080"/>
<rect x="1100" y="297" width="1" height="2" fill="#808080"/>
<rect x="1118" y="297" width="1" height="4" fill="#808080"/>
<rect x="1136" y="297" width="1" height="2" fill="#808080"/>
<rect x="1153" y="297" width="1" height="2" fill="#808080"/>
<rect x="1171" y="297" width="1" height="2" fill="#808080"/>
<rect x="1189" y="297" width="1" height="4" fill="#808080"/>
<rect x="1206" y="297" width="1" height="2" fill="#808080"/>
<text x="61.5" y="314" font-size="11" letter-spacing="-0.28" text-anchor="middle">00.000</text>
<text x="131.5" y="314" font-size="11" letter-spacing="-0.28" text-anchor="middle">02.000</text>
<text x="202.5" y="314" font-size="11" letter-spacing="-0.28" text-anchor="middle">04.000</text>
<text x="272.5" y="314" font-size="11" letter-spacing="-0.28" text-anchor="middle">06.000</text>
<text x="343.5" y="314" font-size="11" letter-spacing="-0.28" text-anchor="middle">08.000</text>
<text x="413.5" y="314" font-size="11" letter-spacing="-0.28" text-anchor="middle">10.000</text>
<text x="484.5" y="314" font-size="11" letter-spacing="-0.28" text-anchor="middle">12.000</text>
<text x="554.5" y="314" font-size="11" letter-spacing="-0.28" text-anchor="middle">14.000</text>
<text x="625.5" y="314" font-size="11" letter-spacing="-0.28" text-anchor="middle">16.000</text>
<text x="695.5" y="314" font-size="11" letter-spacing="-0.28" text-anchor="middle">18.000</text>
<text x="766.5" y="314" font-size="11" letter-spacing="-0.28" text-anchor="middle">20.000</text>
<text x="836.5" y="314" font-size="11" letter-spacing="-0.28" text-anchor="middle">22.000</text>
<text x="907.5" y="314" font-size="11" letter-spacing="-0.28" text-anchor="middle">24.000</text>
<text x="977.5" y="314" font-size="11" letter-spacing="-0.28" text-anchor="middle">26.000</text>
<text x="1048.5" y="314" font-size="11" letter-spacing="-0.28" text-anchor="middle">28.000</text>
<text x="1118.5" y="314" font-size="11" letter-spacing="-0.28" text-anchor="middle">30.000</text>
<text x="1189.5" y="314" font-size="11" letter-spacing="-0.28" text-anchor="middle">32.000</text>
<polyline points="61.0,249.5 68.7,248.3 73.3,252.0 75.3,260.7 76.7,268.0 81.3,277.3 84.7,280.0 90.0,282.3 95.0,283.0 100.4,284.0 110.0,282.6 160.0,282.6 177.0,281.0 230.0,282.0 277.0,279.0 294.0,282.0 342.0,284.0 355.0,281.5 369.0,278.2 376.3,273.2 388.0,271.5 412.0,271.5 436.0,272.2 444.4,276.3 448.0,279.4 457.6,281.0 472.0,282.3 500.6,279.4 517.0,282.3 531.7,282.0 553.0,280.4 577.0,278.7 605.8,276.3 664.0,276.0 668.7,274.2 673.5,265.1 678.3,263.9 685.4,265.1 695.0,262.2 711.7,259.8 721.3,257.5 735.6,252.0 739.2,259.1 742.8,273.5 747.6,280.2 764.3,281.8 766.7,282.6 795.4,282.6 807.3,278.3 812.0,274.7 831.2,272.3 840.8,268.7 855.2,267.5 874.3,265.6 883.8,266.3 893.4,263.2 904.2,262.7 907.8,257.2 915.0,248.4 927.2,239.7 934.6,236.0 945.7,237.2 966.7,244.2 970.4,244.2 1073.0,244.6 1086.5,244.6 1100.0,245.4 1110.0,246.6 1115.0,244.6 1117.4,239.7 1124.8,235.3 1129.7,234.8 1131.0,250.8 1134.7,264.4 1137.2,273.8 1144.6,278.0 1152.0,281.2 1159.4,283.0 1205.0,283.0" fill="none" stroke="#ff0000" stroke-width="1"/>
<polyline points="61.0,249.5 68.7,248.3 73.3,252.0 73.3,252.0" fill="none" stroke="#800000" stroke-width="1.4"/>
<polyline points="61.0,249.5 68.7,248.3 73.3,252.0 73.3,252.0" fill="none" stroke="#800000" stroke-width="3" stroke-dasharray="3.5,1" stroke-linejoin="round"/>
<polyline points="84.0,279.4 84.7,280.0 90.0,282.3 95.0,283.0 100.4,284.0 110.0,282.6 160.0,282.6 177.0,281.0 230.0,282.0 277.0,279.0 294.0,282.0 342.0,284.0 355.0,281.5 369.0,278.2 376.3,273.2 388.0,271.5 412.0,271.5 436.0,272.2 444.4,276.3 448.0,279.4 457.6,281.0 472.0,282.3 500.6,279.4 517.0,282.3 531.7,282.0 553.0,280.4 577.0,278.7 605.8,276.3 664.0,276.0 668.7,274.2 673.5,265.1 678.3,263.9 685.4,265.1 695.0,262.2 711.7,259.8 721.3,257.5 735.6,252.0 735.6,252.0" fill="none" stroke="#800000" stroke-width="1.4"/>
<polyline points="84.0,279.4 84.7,280.0 90.0,282.3 95.0,283.0 100.4,284.0 110.0,282.6 160.0,282.6 177.0,281.0 230.0,282.0 277.0,279.0 294.0,282.0 342.0,284.0 355.0,281.5 369.0,278.2 376.3,273.2 388.0,271.5 412.0,271.5 436.0,272.2 444.4,276.3 448.0,279.4 457.6,281.0 472.0,282.3 500.6,279.4 517.0,282.3 531.7,282.0 553.0,280.4 577.0,278.7 605.8,276.3 664.0,276.0 668.7,274.2 673.5,265.1 678.3,263.9 685.4,265.1 695.0,262.2 711.7,259.8 721.3,257.5 735.6,252.0 735.6,252.0" fill="none" stroke="#800000" stroke-width="3" stroke-dasharray="3.5,1" stroke-linejoin="round"/>
<polyline points="742.0,270.3 742.8,273.5 747.6,280.2 764.3,281.8 766.7,282.6 795.4,282.6 807.3,278.3 812.0,274.7 831.2,272.3 840.8,268.7 855.2,267.5 874.3,265.6 883.8,266.3 893.4,263.2 904.2,262.7 907.8,257.2 915.0,248.4 927.2,239.7 934.6,236.0 945.7,237.2 945.7,237.2" fill="none" stroke="#800000" stroke-width="1.4"/>
<polyline points="742.0,270.3 742.8,273.5 747.6,280.2 764.3,281.8 766.7,282.6 795.4,282.6 807.3,278.3 812.0,274.7 831.2,272.3 840.8,268.7 855.2,267.5 874.3,265.6 883.8,266.3 893.4,263.2 904.2,262.7 907.8,257.2 915.0,248.4 927.2,239.7 934.6,236.0 945.7,237.2 945.7,237.2" fill="none" stroke="#800000" stroke-width="3" stroke-dasharray="3.5,1" stroke-linejoin="round"/>
<polyline points="964.0,243.3 966.7,244.2 970.4,244.2 971.0,244.2" fill="none" stroke="#800000" stroke-width="1.4"/>
<polyline points="964.0,243.3 966.7,244.2 970.4,244.2 971.0,244.2" fill="none" stroke="#800000" stroke-width="3" stroke-dasharray="3.5,1" stroke-linejoin="round"/>
<polyline points="1099.0,245.3 1100.0,245.4 1110.0,246.6 1115.0,244.6 1117.4,239.7 1124.8,235.3 1129.7,234.8 1130.0,238.5" fill="none" stroke="#800000" stroke-width="1.4"/>
<polyline points="1099.0,245.3 1100.0,245.4 1110.0,246.6 1115.0,244.6 1117.4,239.7 1124.8,235.3 1129.7,234.8 1130.0,238.5" fill="none" stroke="#800000" stroke-width="3" stroke-dasharray="3.5,1" stroke-linejoin="round"/>
<polyline points="1137.0,273.0 1137.2,273.8 1144.6,278.0 1152.0,281.2 1159.4,283.0 1205.0,283.0" fill="none" stroke="#800000" stroke-width="1.4"/>
<polyline points="1137.0,273.0 1137.2,273.8 1144.6,278.0 1152.0,281.2 1159.4,283.0 1205.0,283.0" fill="none" stroke="#800000" stroke-width="3" stroke-dasharray="3.5,1" stroke-linejoin="round"/>
<rect x="73.8" y="259.2" width="3" height="3" fill="#800000"/>
<rect x="75.2" y="266.5" width="3" height="3" fill="#800000"/>
<rect x="79.8" y="275.8" width="3" height="3" fill="#800000"/>
<rect x="737.7" y="257.6" width="3" height="3" fill="#800000"/>
<rect x="1071.5" y="243.1" width="3" height="3" fill="#800000"/>
<rect x="1129.5" y="249.3" width="3" height="3" fill="#800000"/>
<rect x="1133.2" y="262.9" width="3" height="3" fill="#800000"/>
<rect x="60" y="217" width="1" height="80" fill="#000090"/>
<rect x="61" y="215" width="1" height="1" fill="#000090"/>
<rect x="61" y="216" width="1" height="81" fill="#6060ff"/>
<line x1="61.5" y1="217" x2="61.5" y2="296" stroke="#c8c800" stroke-dasharray="3,3"/>
<rect x="62" y="217" width="1" height="80" fill="#0060ff"/>
<rect x="60" y="216" width="3" height="1" fill="#e0e040"/><rect x="60" y="296" width="3" height="1" fill="#ffff80"/>
<rect x="60" y="248.0" width="3" height="3" fill="#70e070"/>
<rect x="6" y="317" width="1231" height="1" fill="#a0a0a0"/>
<rect x="7" y="318" width="1230" height="15" fill="#f0f0f0"/>
<rect x="9" y="321" width="9" height="9" fill="#0000ff"/>
<text transform="translate(23.3,330) scale(0.883,1)" font-size="12">Engine Speed (rpm)</text>
<text transform="translate(1231,330) scale(0.893,1)" font-size="12" text-anchor="end">Current 3491 Avg 2293.38 Min 633 Max 6259</text>
<line x1="61.5" y1="337" x2="61.5" y2="415" stroke="#808080" stroke-dasharray="3,3"/>
<line x1="131.5" y1="337" x2="131.5" y2="415" stroke="#808080" stroke-dasharray="3,3"/>
<line x1="202.5" y1="337" x2="202.5" y2="415" stroke="#808080" stroke-dasharray="3,3"/>
<line x1="272.5" y1="337" x2="272.5" y2="415" stroke="#808080" stroke-dasharray="3,3"/>
<line x1="343.5" y1="337" x2="343.5" y2="415" stroke="#808080" stroke-dasharray="3,3"/>
<line x1="413.5" y1="337" x2="413.5" y2="415" stroke="#808080" stroke-dasharray="3,3"/>
<line x1="484.5" y1="337" x2="484.5" y2="415" stroke="#808080" stroke-dasharray="3,3"/>
<line x1="554.5" y1="337" x2="554.5" y2="415" stroke="#808080" stroke-dasharray="3,3"/>
<line x1="625.5" y1="337" x2="625.5" y2="415" stroke="#808080" stroke-dasharray="3,3"/>
<line x1="695.5" y1="337" x2="695.5" y2="415" stroke="#808080" stroke-dasharray="3,3"/>
<line x1="766.5" y1="337" x2="766.5" y2="415" stroke="#808080" stroke-dasharray="3,3"/>
<line x1="836.5" y1="337" x2="836.5" y2="415" stroke="#808080" stroke-dasharray="3,3"/>
<line x1="907.5" y1="337" x2="907.5" y2="415" stroke="#808080" stroke-dasharray="3,3"/>
<line x1="977.5" y1="337" x2="977.5" y2="415" stroke="#808080" stroke-dasharray="3,3"/>
<line x1="1048.5" y1="337" x2="1048.5" y2="415" stroke="#808080" stroke-dasharray="3,3"/>
<line x1="1118.5" y1="337" x2="1118.5" y2="415" stroke="#808080" stroke-dasharray="3,3"/>
<line x1="1189.5" y1="337" x2="1189.5" y2="415" stroke="#808080" stroke-dasharray="3,3"/>
<line x1="54" y1="339.5" x2="1212" y2="339.5" stroke="#808080" stroke-dasharray="3,3"/>
<rect x="49" y="339" width="3" height="1" fill="#808080"/>
<text x="46" y="343" font-size="11" letter-spacing="-0.28" text-anchor="end">8,000</text>
<line x1="54" y1="356.5" x2="1212" y2="356.5" stroke="#808080" stroke-dasharray="3,3"/>
<rect x="49" y="356" width="3" height="1" fill="#808080"/>
<text x="46" y="360" font-size="11" letter-spacing="-0.28" text-anchor="end">6,000</text>
<line x1="54" y1="374.5" x2="1212" y2="374.5" stroke="#808080" stroke-dasharray="3,3"/>
<rect x="49" y="374" width="3" height="1" fill="#808080"/>
<text x="46" y="378" font-size="11" letter-spacing="-0.28" text-anchor="end">4,000</text>
<line x1="54" y1="391.5" x2="1212" y2="391.5" stroke="#808080" stroke-dasharray="3,3"/>
<rect x="49" y="391" width="3" height="1" fill="#808080"/>
<text x="46" y="395" font-size="11" letter-spacing="-0.28" text-anchor="end">2,000</text>
<line x1="54" y1="409.5" x2="1212" y2="409.5" stroke="#808080" stroke-dasharray="3,3"/>
<rect x="49" y="409" width="3" height="1" fill="#808080"/>
<text x="46" y="413" font-size="11" letter-spacing="-0.28" text-anchor="end">0</text>
<rect x="51" y="343" width="1" height="1" fill="#808080"/>
<rect x="51" y="347" width="1" height="1" fill="#808080"/>
<rect x="51" y="352" width="1" height="1" fill="#808080"/>
<rect x="51" y="361" width="1" height="1" fill="#808080"/>
<rect x="51" y="365" width="1" height="1" fill="#808080"/>
<rect x="51" y="369" width="1" height="1" fill="#808080"/>
<rect x="51" y="378" width="1" height="1" fill="#808080"/>
<rect x="51" y="382" width="1" height="1" fill="#808080"/>
<rect x="51" y="387" width="1" height="1" fill="#808080"/>
<rect x="51" y="396" width="1" height="1" fill="#808080"/>
<rect x="51" y="400" width="1" height="1" fill="#808080"/>
<rect x="51" y="404" width="1" height="1" fill="#808080"/>
<rect x="51" y="413" width="1" height="1" fill="#808080"/>
<rect x="63" y="337" width="97" height="78" fill="rgba(255,0,0,0.4)"/>
<rect x="160" y="337" width="1" height="78" fill="#808080"/>
<rect x="52" y="336" width="1161" height="1" fill="#000"/>
<rect x="52" y="336" width="2" height="81" fill="#000"/>
<rect x="52" y="415" width="1161" height="2" fill="#000"/>
<rect x="1212" y="336" width="1" height="81" fill="#000"/>
<rect x="61" y="417" width="1" height="4" fill="#808080"/>
<rect x="78" y="417" width="1" height="2" fill="#808080"/>
<rect x="96" y="417" width="1" height="2" fill="#808080"/>
<rect x="113" y="417" width="1" height="2" fill="#808080"/>
<rect x="131" y="417" width="1" height="4" fill="#808080"/>
<rect x="149" y="417" width="1" height="2" fill="#808080"/>
<rect x="166" y="417" width="1" height="2" fill="#808080"/>
<rect x="184" y="417" width="1" height="2" fill="#808080"/>
<rect x="202" y="417" width="1" height="4" fill="#808080"/>
<rect x="219" y="417" width="1" height="2" fill="#808080"/>
<rect x="237" y="417" width="1" height="2" fill="#808080"/>
<rect x="254" y="417" width="1" height="2" fill="#808080"/>
<rect x="272" y="417" width="1" height="4" fill="#808080"/>
<rect x="290" y="417" width="1" height="2" fill="#808080"/>
<rect x="307" y="417" width="1" height="2" fill="#808080"/>
<rect x="325" y="417" width="1" height="2" fill="#808080"/>
<rect x="343" y="417" width="1" height="4" fill="#808080"/>
<rect x="360" y="417" width="1" height="2" fill="#808080"/>
<rect x="378" y="417" width="1" height="2" fill="#808080"/>
<rect x="395" y="417" width="1" height="2" fill="#808080"/>
<rect x="413" y="417" width="1" height="4" fill="#808080"/>
<rect x="431" y="417" width="1" height="2" fill="#808080"/>
<rect x="448" y="417" width="1" height="2" fill="#808080"/>
<rect x="466" y="417" width="1" height="2" fill="#808080"/>
<rect x="484" y="417" width="1" height="4" fill="#808080"/>
<rect x="501" y="417" width="1" height="2" fill="#808080"/>
<rect x="519" y="417" width="1" height="2" fill="#808080"/>
<rect x="536" y="417" width="1" height="2" fill="#808080"/>
<rect x="554" y="417" width="1" height="4" fill="#808080"/>
<rect x="572" y="417" width="1" height="2" fill="#808080"/>
<rect x="589" y="417" width="1" height="2" fill="#808080"/>
<rect x="607" y="417" width="1" height="2" fill="#808080"/>
<rect x="625" y="417" width="1" height="4" fill="#808080"/>
<rect x="642" y="417" width="1" height="2" fill="#808080"/>
<rect x="660" y="417" width="1" height="2" fill="#808080"/>
<rect x="677" y="417" width="1" height="2" fill="#808080"/>
<rect x="695" y="417" width="1" height="4" fill="#808080"/>
<rect x="713" y="417" width="1" height="2" fill="#808080"/>
<rect x="730" y="417" width="1" height="2" fill="#808080"/>
<rect x="748" y="417" width="1" height="2" fill="#808080"/>
<rect x="766" y="417" width="1" height="4" fill="#808080"/>
<rect x="783" y="417" width="1" height="2" fill="#808080"/>
<rect x="801" y="417" width="1" height="2" fill="#808080"/>
<rect x="818" y="417" width="1" height="2" fill="#808080"/>
<rect x="836" y="417" width="1" height="4" fill="#808080"/>
<rect x="854" y="417" width="1" height="2" fill="#808080"/>
<rect x="871" y="417" width="1" height="2" fill="#808080"/>
<rect x="889" y="417" width="1" height="2" fill="#808080"/>
<rect x="907" y="417" width="1" height="4" fill="#808080"/>
<rect x="924" y="417" width="1" height="2" fill="#808080"/>
<rect x="942" y="417" width="1" height="2" fill="#808080"/>
<rect x="959" y="417" width="1" height="2" fill="#808080"/>
<rect x="977" y="417" width="1" height="4" fill="#808080"/>
<rect x="995" y="417" width="1" height="2" fill="#808080"/>
<rect x="1012" y="417" width="1" height="2" fill="#808080"/>
<rect x="1030" y="417" width="1" height="2" fill="#808080"/>
<rect x="1048" y="417" width="1" height="4" fill="#808080"/>
<rect x="1065" y="417" width="1" height="2" fill="#808080"/>
<rect x="1083" y="417" width="1" height="2" fill="#808080"/>
<rect x="1100" y="417" width="1" height="2" fill="#808080"/>
<rect x="1118" y="417" width="1" height="4" fill="#808080"/>
<rect x="1136" y="417" width="1" height="2" fill="#808080"/>
<rect x="1153" y="417" width="1" height="2" fill="#808080"/>
<rect x="1171" y="417" width="1" height="2" fill="#808080"/>
<rect x="1189" y="417" width="1" height="4" fill="#808080"/>
<rect x="1206" y="417" width="1" height="2" fill="#808080"/>
<text x="61.5" y="434" font-size="11" letter-spacing="-0.28" text-anchor="middle">00.000</text>
<text x="131.5" y="434" font-size="11" letter-spacing="-0.28" text-anchor="middle">02.000</text>
<text x="202.5" y="434" font-size="11" letter-spacing="-0.28" text-anchor="middle">04.000</text>
<text x="272.5" y="434" font-size="11" letter-spacing="-0.28" text-anchor="middle">06.000</text>
<text x="343.5" y="434" font-size="11" letter-spacing="-0.28" text-anchor="middle">08.000</text>
<text x="413.5" y="434" font-size="11" letter-spacing="-0.28" text-anchor="middle">10.000</text>
<text x="484.5" y="434" font-size="11" letter-spacing="-0.28" text-anchor="middle">12.000</text>
<text x="554.5" y="434" font-size="11" letter-spacing="-0.28" text-anchor="middle">14.000</text>
<text x="625.5" y="434" font-size="11" letter-spacing="-0.28" text-anchor="middle">16.000</text>
<text x="695.5" y="434" font-size="11" letter-spacing="-0.28" text-anchor="middle">18.000</text>
<text x="766.5" y="434" font-size="11" letter-spacing="-0.28" text-anchor="middle">20.000</text>
<text x="836.5" y="434" font-size="11" letter-spacing="-0.28" text-anchor="middle">22.000</text>
<text x="907.5" y="434" font-size="11" letter-spacing="-0.28" text-anchor="middle">24.000</text>
<text x="977.5" y="434" font-size="11" letter-spacing="-0.28" text-anchor="middle">26.000</text>
<text x="1048.5" y="434" font-size="11" letter-spacing="-0.28" text-anchor="middle">28.000</text>
<text x="1118.5" y="434" font-size="11" letter-spacing="-0.28" text-anchor="middle">30.000</text>
<text x="1189.5" y="434" font-size="11" letter-spacing="-0.28" text-anchor="middle">32.000</text>
<polyline points="61.0,377.9 70.5,376.7 79.0,378.0 88.5,381.0 102.8,382.7 126.7,384.4 160.2,385.8 174.5,386.8 198.4,389.9 234.3,394.7 270.2,399.4 282.1,395.9 294.0,394.7 318.0,395.9 342.0,396.3 362.0,393.2 378.7,391.5 397.8,390.3 421.7,389.1 445.6,389.6 460.0,392.7 481.5,396.8 495.8,399.2 515.0,394.4 536.5,396.8 558.0,400.1 589.0,402.3 601.0,403.0 625.0,402.3 650.0,401.8 668.7,402.6 675.9,400.2 683.0,394.0 695.0,391.1 711.7,389.4 733.2,383.9 745.2,385.1 752.4,389.2 766.7,391.1 783.4,394.0 801.4,397.1 814.5,389.4 824.0,390.4 843.2,388.2 867.1,385.1 891.0,382.0 903.0,379.6 915.0,375.0 926.9,369.1 945.7,363.4 964.2,357.2 970.4,356.5 1073.0,356.5 1086.5,356.5 1100.0,354.8 1106.3,354.0 1112.5,356.5 1117.4,362.7 1124.8,369.1 1140.9,374.5 1159.4,376.3 1184.0,379.0 1205.0,380.7" fill="none" stroke="#ff0000" stroke-width="1"/>
<polyline points="61.0,377.9 70.5,376.7 79.0,378.0 88.5,381.0 102.8,382.7 126.7,384.4 160.2,385.8 174.5,386.8 198.4,389.9 234.3,394.7 270.2,399.4 282.1,395.9 294.0,394.7 318.0,395.9 342.0,396.3 362.0,393.2 378.7,391.5 397.8,390.3 421.7,389.1 445.6,389.6 460.0,392.7 481.5,396.8 495.8,399.2 515.0,394.4 536.5,396.8 558.0,400.1 589.0,402.3 601.0,403.0 625.0,402.3 650.0,401.8 668.7,402.6 675.9,400.2 683.0,394.0 695.0,391.1 711.7,389.4 733.2,383.9 745.2,385.1 752.4,389.2 766.7,391.1 783.4,394.0 801.4,397.1 814.5,389.4 824.0,390.4 843.2,388.2 867.1,385.1 891.0,382.0 903.0,379.6 915.0,375.0 926.9,369.1 945.7,363.4 945.7,363.4" fill="none" stroke="#800000" stroke-width="1.4"/>
<polyline points="61.0,377.9 70.5,376.7 79.0,378.0 88.5,381.0 102.8,382.7 126.7,384.4 160.2,385.8 174.5,386.8 198.4,389.9 234.3,394.7 270.2,399.4 282.1,395.9 294.0,394.7 318.0,395.9 342.0,396.3 362.0,393.2 378.7,391.5 397.8,390.3 421.7,389.1 445.6,389.6 460.0,392.7 481.5,396.8 495.8,399.2 515.0,394.4 536.5,396.8 558.0,400.1 589.0,402.3 601.0,403.0 625.0,402.3 650.0,401.8 668.7,402.6 675.9,400.2 683.0,394.0 695.0,391.1 711.7,389.4 733.2,383.9 745.2,385.1 752.4,389.2 766.7,391.1 783.4,394.0 801.4,397.1 814.5,389.4 824.0,390.4 843.2,388.2 867.1,385.1 891.0,382.0 903.0,379.6 915.0,375.0 926.9,369.1 945.7,363.4 945.7,363.4" fill="none" stroke="#800000" stroke-width="3" stroke-dasharray="3.5,1" stroke-linejoin="round"/>
<polyline points="963.0,357.6 964.2,357.2 970.4,356.5 971.0,356.5" fill="none" stroke="#800000" stroke-width="1.4"/>
<polyline points="963.0,357.6 964.2,357.2 970.4,356.5 971.0,356.5" fill="none" stroke="#800000" stroke-width="3" stroke-dasharray="3.5,1" stroke-linejoin="round"/>
<polyline points="1099.0,354.9 1100.0,354.8 1106.3,354.0 1112.5,356.5 1117.4,362.7 1124.8,369.1 1140.9,374.5 1159.4,376.3 1184.0,379.0 1205.0,380.7" fill="none" stroke="#800000" stroke-width="1.4"/>
<polyline points="1099.0,354.9 1100.0,354.8 1106.3,354.0 1112.5,356.5 1117.4,362.7 1124.8,369.1 1140.9,374.5 1159.4,376.3 1184.0,379.0 1205.0,380.7" fill="none" stroke="#800000" stroke-width="3" stroke-dasharray="3.5,1" stroke-linejoin="round"/>
<rect x="1071.5" y="355.0" width="3" height="3" fill="#800000"/>
<rect x="60" y="337" width="1" height="80" fill="#000090"/>
<rect x="61" y="335" width="1" height="1" fill="#000090"/>
<rect x="61" y="336" width="1" height="81" fill="#6060ff"/>
<line x1="61.5" y1="337" x2="61.5" y2="416" stroke="#c8c800" stroke-dasharray="3,3"/>
<rect x="62" y="337" width="1" height="80" fill="#0060ff"/>
<rect x="60" y="336" width="3" height="1" fill="#e0e040"/><rect x="60" y="416" width="3" height="1" fill="#ffff80"/>
<rect x="60" y="376.4" width="3" height="3" fill="#70e070"/>
<rect x="6" y="437" width="1231" height="1" fill="#a0a0a0"/>
<rect x="7" y="438" width="1230" height="15" fill="#f0f0f0"/>
<rect x="9" y="441" width="9" height="9" fill="#008000"/>
<text transform="translate(23.3,450) scale(0.883,1)" font-size="12">Feedback Knock Correction (4-byte)* (degrees)</text>
<text transform="translate(1231,450) scale(0.893,1)" font-size="12" text-anchor="end">Current 0 Avg 0 Min 0 Max 0</text>
<line x1="61.5" y1="457" x2="61.5" y2="535" stroke="#808080" stroke-dasharray="3,3"/>
<line x1="131.5" y1="457" x2="131.5" y2="535" stroke="#808080" stroke-dasharray="3,3"/>
<line x1="202.5" y1="457" x2="202.5" y2="535" stroke="#808080" stroke-dasharray="3,3"/>
<line x1="272.5" y1="457" x2="272.5" y2="535" stroke="#808080" stroke-dasharray="3,3"/>
<line x1="343.5" y1="457" x2="343.5" y2="535" stroke="#808080" stroke-dasharray="3,3"/>
<line x1="413.5" y1="457" x2="413.5" y2="535" stroke="#808080" stroke-dasharray="3,3"/>
<line x1="484.5" y1="457" x2="484.5" y2="535" stroke="#808080" stroke-dasharray="3,3"/>
<line x1="554.5" y1="457" x2="554.5" y2="535" stroke="#808080" stroke-dasharray="3,3"/>
<line x1="625.5" y1="457" x2="625.5" y2="535" stroke="#808080" stroke-dasharray="3,3"/>
<line x1="695.5" y1="457" x2="695.5" y2="535" stroke="#808080" stroke-dasharray="3,3"/>
<line x1="766.5" y1="457" x2="766.5" y2="535" stroke="#808080" stroke-dasharray="3,3"/>
<line x1="836.5" y1="457" x2="836.5" y2="535" stroke="#808080" stroke-dasharray="3,3"/>
<line x1="907.5" y1="457" x2="907.5" y2="535" stroke="#808080" stroke-dasharray="3,3"/>
<line x1="977.5" y1="457" x2="977.5" y2="535" stroke="#808080" stroke-dasharray="3,3"/>
<line x1="1048.5" y1="457" x2="1048.5" y2="535" stroke="#808080" stroke-dasharray="3,3"/>
<line x1="1118.5" y1="457" x2="1118.5" y2="535" stroke="#808080" stroke-dasharray="3,3"/>
<line x1="1189.5" y1="457" x2="1189.5" y2="535" stroke="#808080" stroke-dasharray="3,3"/>
<line x1="54" y1="496.5" x2="1212" y2="496.5" stroke="#808080" stroke-dasharray="3,3"/>
<rect x="49" y="496" width="3" height="1" fill="#808080"/>
<text x="46" y="500" font-size="11" letter-spacing="-0.28" text-anchor="end">0</text>
<rect x="63" y="457" width="97" height="78" fill="rgba(255,0,0,0.4)"/>
<rect x="160" y="457" width="1" height="78" fill="#808080"/>
<rect x="52" y="456" width="1161" height="1" fill="#000"/>
<rect x="52" y="456" width="2" height="81" fill="#000"/>
<rect x="52" y="535" width="1161" height="2" fill="#000"/>
<rect x="1212" y="456" width="1" height="81" fill="#000"/>
<rect x="61" y="537" width="1" height="4" fill="#808080"/>
<rect x="78" y="537" width="1" height="2" fill="#808080"/>
<rect x="96" y="537" width="1" height="2" fill="#808080"/>
<rect x="113" y="537" width="1" height="2" fill="#808080"/>
<rect x="131" y="537" width="1" height="4" fill="#808080"/>
<rect x="149" y="537" width="1" height="2" fill="#808080"/>
<rect x="166" y="537" width="1" height="2" fill="#808080"/>
<rect x="184" y="537" width="1" height="2" fill="#808080"/>
<rect x="202" y="537" width="1" height="4" fill="#808080"/>
<rect x="219" y="537" width="1" height="2" fill="#808080"/>
<rect x="237" y="537" width="1" height="2" fill="#808080"/>
<rect x="254" y="537" width="1" height="2" fill="#808080"/>
<rect x="272" y="537" width="1" height="4" fill="#808080"/>
<rect x="290" y="537" width="1" height="2" fill="#808080"/>
<rect x="307" y="537" width="1" height="2" fill="#808080"/>
<rect x="325" y="537" width="1" height="2" fill="#808080"/>
<rect x="343" y="537" width="1" height="4" fill="#808080"/>
<rect x="360" y="537" width="1" height="2" fill="#808080"/>
<rect x="378" y="537" width="1" height="2" fill="#808080"/>
<rect x="395" y="537" width="1" height="2" fill="#808080"/>
<rect x="413" y="537" width="1" height="4" fill="#808080"/>
<rect x="431" y="537" width="1" height="2" fill="#808080"/>
<rect x="448" y="537" width="1" height="2" fill="#808080"/>
<rect x="466" y="537" width="1" height="2" fill="#808080"/>
<rect x="484" y="537" width="1" height="4" fill="#808080"/>
<rect x="501" y="537" width="1" height="2" fill="#808080"/>
<rect x="519" y="537" width="1" height="2" fill="#808080"/>
<rect x="536" y="537" width="1" height="2" fill="#808080"/>
<rect x="554" y="537" width="1" height="4" fill="#808080"/>
<rect x="572" y="537" width="1" height="2" fill="#808080"/>
<rect x="589" y="537" width="1" height="2" fill="#808080"/>
<rect x="607" y="537" width="1" height="2" fill="#808080"/>
<rect x="625" y="537" width="1" height="4" fill="#808080"/>
<rect x="642" y="537" width="1" height="2" fill="#808080"/>
<rect x="660" y="537" width="1" height="2" fill="#808080"/>
<rect x="677" y="537" width="1" height="2" fill="#808080"/>
<rect x="695" y="537" width="1" height="4" fill="#808080"/>
<rect x="713" y="537" width="1" height="2" fill="#808080"/>
<rect x="730" y="537" width="1" height="2" fill="#808080"/>
<rect x="748" y="537" width="1" height="2" fill="#808080"/>
<rect x="766" y="537" width="1" height="4" fill="#808080"/>
<rect x="783" y="537" width="1" height="2" fill="#808080"/>
<rect x="801" y="537" width="1" height="2" fill="#808080"/>
<rect x="818" y="537" width="1" height="2" fill="#808080"/>
<rect x="836" y="537" width="1" height="4" fill="#808080"/>
<rect x="854" y="537" width="1" height="2" fill="#808080"/>
<rect x="871" y="537" width="1" height="2" fill="#808080"/>
<rect x="889" y="537" width="1" height="2" fill="#808080"/>
<rect x="907" y="537" width="1" height="4" fill="#808080"/>
<rect x="924" y="537" width="1" height="2" fill="#808080"/>
<rect x="942" y="537" width="1" height="2" fill="#808080"/>
<rect x="959" y="537" width="1" height="2" fill="#808080"/>
<rect x="977" y="537" width="1" height="4" fill="#808080"/>
<rect x="995" y="537" width="1" height="2" fill="#808080"/>
<rect x="1012" y="537" width="1" height="2" fill="#808080"/>
<rect x="1030" y="537" width="1" height="2" fill="#808080"/>
<rect x="1048" y="537" width="1" height="4" fill="#808080"/>
<rect x="1065" y="537" width="1" height="2" fill="#808080"/>
<rect x="1083" y="537" width="1" height="2" fill="#808080"/>
<rect x="1100" y="537" width="1" height="2" fill="#808080"/>
<rect x="1118" y="537" width="1" height="4" fill="#808080"/>
<rect x="1136" y="537" width="1" height="2" fill="#808080"/>
<rect x="1153" y="537" width="1" height="2" fill="#808080"/>
<rect x="1171" y="537" width="1" height="2" fill="#808080"/>
<rect x="1189" y="537" width="1" height="4" fill="#808080"/>
<rect x="1206" y="537" width="1" height="2" fill="#808080"/>
<text x="61.5" y="554" font-size="11" letter-spacing="-0.28" text-anchor="middle">00.000</text>
<text x="131.5" y="554" font-size="11" letter-spacing="-0.28" text-anchor="middle">02.000</text>
<text x="202.5" y="554" font-size="11" letter-spacing="-0.28" text-anchor="middle">04.000</text>
<text x="272.5" y="554" font-size="11" letter-spacing="-0.28" text-anchor="middle">06.000</text>
<text x="343.5" y="554" font-size="11" letter-spacing="-0.28" text-anchor="middle">08.000</text>
<text x="413.5" y="554" font-size="11" letter-spacing="-0.28" text-anchor="middle">10.000</text>
<text x="484.5" y="554" font-size="11" letter-spacing="-0.28" text-anchor="middle">12.000</text>
<text x="554.5" y="554" font-size="11" letter-spacing="-0.28" text-anchor="middle">14.000</text>
<text x="625.5" y="554" font-size="11" letter-spacing="-0.28" text-anchor="middle">16.000</text>
<text x="695.5" y="554" font-size="11" letter-spacing="-0.28" text-anchor="middle">18.000</text>
<text x="766.5" y="554" font-size="11" letter-spacing="-0.28" text-anchor="middle">20.000</text>
<text x="836.5" y="554" font-size="11" letter-spacing="-0.28" text-anchor="middle">22.000</text>
<text x="907.5" y="554" font-size="11" letter-spacing="-0.28" text-anchor="middle">24.000</text>
<text x="977.5" y="554" font-size="11" letter-spacing="-0.28" text-anchor="middle">26.000</text>
<text x="1048.5" y="554" font-size="11" letter-spacing="-0.28" text-anchor="middle">28.000</text>
<text x="1118.5" y="554" font-size="11" letter-spacing="-0.28" text-anchor="middle">30.000</text>
<text x="1189.5" y="554" font-size="11" letter-spacing="-0.28" text-anchor="middle">32.000</text>
<polyline points="61.0,496.5 1205.0,496.5" fill="none" stroke="#ff0000" stroke-width="1"/>
<polyline points="62.0,496.5 946.0,496.5" fill="none" stroke="#800000" stroke-width="1.4"/>
<polyline points="62.0,496.5 946.0,496.5" fill="none" stroke="#800000" stroke-width="3" stroke-dasharray="3.5,1" stroke-linejoin="round"/>
<polyline points="964.0,496.5 972.0,496.5" fill="none" stroke="#800000" stroke-width="1.4"/>
<polyline points="964.0,496.5 972.0,496.5" fill="none" stroke="#800000" stroke-width="3" stroke-dasharray="3.5,1" stroke-linejoin="round"/>
<polyline points="1099.0,496.5 1205.0,496.5" fill="none" stroke="#800000" stroke-width="1.4"/>
<polyline points="1099.0,496.5 1205.0,496.5" fill="none" stroke="#800000" stroke-width="3" stroke-dasharray="3.5,1" stroke-linejoin="round"/>
<rect x="1071.5" y="494.5" width="3" height="3" fill="#800000"/>
<rect x="60" y="457" width="1" height="80" fill="#000090"/>
<rect x="61" y="455" width="1" height="1" fill="#000090"/>
<rect x="61" y="456" width="1" height="81" fill="#6060ff"/>
<line x1="61.5" y1="457" x2="61.5" y2="536" stroke="#c8c800" stroke-dasharray="3,3"/>
<rect x="62" y="457" width="1" height="80" fill="#0060ff"/>
<rect x="60" y="456" width="3" height="1" fill="#e0e040"/><rect x="60" y="536" width="3" height="1" fill="#ffff80"/>
<rect x="60" y="495.0" width="3" height="3" fill="#70e070"/>
<rect x="6" y="557" width="1231" height="1" fill="#a0a0a0"/>
<rect x="7" y="558" width="1230" height="15" fill="#f0f0f0"/>
<rect x="9" y="561" width="9" height="9" fill="#ffa500"/>
<text transform="translate(23.3,570) scale(0.883,1)" font-size="12">Fine Learning Knock Correction (degrees)</text>
<text transform="translate(1231,570) scale(0.893,1)" font-size="12" text-anchor="end">Current 0 Avg -0.15 Min -3 Max 0</text>
<line x1="61.5" y1="577" x2="61.5" y2="655" stroke="#808080" stroke-dasharray="3,3"/>
<line x1="131.5" y1="577" x2="131.5" y2="655" stroke="#808080" stroke-dasharray="3,3"/>
<line x1="202.5" y1="577" x2="202.5" y2="655" stroke="#808080" stroke-dasharray="3,3"/>
<line x1="272.5" y1="577" x2="272.5" y2="655" stroke="#808080" stroke-dasharray="3,3"/>
<line x1="343.5" y1="577" x2="343.5" y2="655" stroke="#808080" stroke-dasharray="3,3"/>
<line x1="413.5" y1="577" x2="413.5" y2="655" stroke="#808080" stroke-dasharray="3,3"/>
<line x1="484.5" y1="577" x2="484.5" y2="655" stroke="#808080" stroke-dasharray="3,3"/>
<line x1="554.5" y1="577" x2="554.5" y2="655" stroke="#808080" stroke-dasharray="3,3"/>
<line x1="625.5" y1="577" x2="625.5" y2="655" stroke="#808080" stroke-dasharray="3,3"/>
<line x1="695.5" y1="577" x2="695.5" y2="655" stroke="#808080" stroke-dasharray="3,3"/>
<line x1="766.5" y1="577" x2="766.5" y2="655" stroke="#808080" stroke-dasharray="3,3"/>
<line x1="836.5" y1="577" x2="836.5" y2="655" stroke="#808080" stroke-dasharray="3,3"/>
<line x1="907.5" y1="577" x2="907.5" y2="655" stroke="#808080" stroke-dasharray="3,3"/>
<line x1="977.5" y1="577" x2="977.5" y2="655" stroke="#808080" stroke-dasharray="3,3"/>
<line x1="1048.5" y1="577" x2="1048.5" y2="655" stroke="#808080" stroke-dasharray="3,3"/>
<line x1="1118.5" y1="577" x2="1118.5" y2="655" stroke="#808080" stroke-dasharray="3,3"/>
<line x1="1189.5" y1="577" x2="1189.5" y2="655" stroke="#808080" stroke-dasharray="3,3"/>
<line x1="54" y1="578.5" x2="1212" y2="578.5" stroke="#808080" stroke-dasharray="3,3"/>
<rect x="49" y="578" width="3" height="1" fill="#808080"/>
<text x="46" y="582" font-size="11" letter-spacing="-0.28" text-anchor="end">1</text>
<line x1="54" y1="594.5" x2="1212" y2="594.5" stroke="#808080" stroke-dasharray="3,3"/>
<rect x="49" y="594" width="3" height="1" fill="#808080"/>
<text x="46" y="598" font-size="11" letter-spacing="-0.28" text-anchor="end">0</text>
<line x1="54" y1="610.5" x2="1212" y2="610.5" stroke="#808080" stroke-dasharray="3,3"/>
<rect x="49" y="610" width="3" height="1" fill="#808080"/>
<text x="46" y="614" font-size="11" letter-spacing="-0.28" text-anchor="end">-1</text>
<line x1="54" y1="627.5" x2="1212" y2="627.5" stroke="#808080" stroke-dasharray="3,3"/>
<rect x="49" y="627" width="3" height="1" fill="#808080"/>
<text x="46" y="631" font-size="11" letter-spacing="-0.28" text-anchor="end">-2</text>
<line x1="54" y1="643.5" x2="1212" y2="643.5" stroke="#808080" stroke-dasharray="3,3"/>
<rect x="49" y="643" width="3" height="1" fill="#808080"/>
<text x="46" y="647" font-size="11" letter-spacing="-0.28" text-anchor="end">-3</text>
<rect x="51" y="582" width="1" height="1" fill="#808080"/>
<rect x="51" y="586" width="1" height="1" fill="#808080"/>
<rect x="51" y="590" width="1" height="1" fill="#808080"/>
<rect x="51" y="598" width="1" height="1" fill="#808080"/>
<rect x="51" y="602" width="1" height="1" fill="#808080"/>
<rect x="51" y="606" width="1" height="1" fill="#808080"/>
<rect x="51" y="614" width="1" height="1" fill="#808080"/>
<rect x="51" y="618" width="1" height="1" fill="#808080"/>
<rect x="51" y="622" width="1" height="1" fill="#808080"/>
<rect x="51" y="631" width="1" height="1" fill="#808080"/>
<rect x="51" y="635" width="1" height="1" fill="#808080"/>
<rect x="51" y="639" width="1" height="1" fill="#808080"/>
<rect x="51" y="647" width="1" height="1" fill="#808080"/>
<rect x="51" y="651" width="1" height="1" fill="#808080"/>
<rect x="63" y="577" width="97" height="78" fill="rgba(255,0,0,0.4)"/>
<rect x="160" y="577" width="1" height="78" fill="#808080"/>
<rect x="52" y="576" width="1161" height="1" fill="#000"/>
<rect x="52" y="576" width="2" height="81" fill="#000"/>
<rect x="52" y="655" width="1161" height="2" fill="#000"/>
<rect x="1212" y="576" width="1" height="81" fill="#000"/>
<rect x="61" y="657" width="1" height="4" fill="#808080"/>
<rect x="78" y="657" width="1" height="2" fill="#808080"/>
<rect x="96" y="657" width="1" height="2" fill="#808080"/>
<rect x="113" y="657" width="1" height="2" fill="#808080"/>
<rect x="131" y="657" width="1" height="4" fill="#808080"/>
<rect x="149" y="657" width="1" height="2" fill="#808080"/>
<rect x="166" y="657" width="1" height="2" fill="#808080"/>
<rect x="184" y="657" width="1" height="2" fill="#808080"/>
<rect x="202" y="657" width="1" height="4" fill="#808080"/>
<rect x="219" y="657" width="1" height="2" fill="#808080"/>
<rect x="237" y="657" width="1" height="2" fill="#808080"/>
<rect x="254" y="657" width="1" height="2" fill="#808080"/>
<rect x="272" y="657" width="1" height="4" fill="#808080"/>
<rect x="290" y="657" width="1" height="2" fill="#808080"/>
<rect x="307" y="657" width="1" height="2" fill="#808080"/>
<rect x="325" y="657" width="1" height="2" fill="#808080"/>
<rect x="343" y="657" width="1" height="4" fill="#808080"/>
<rect x="360" y="657" width="1" height="2" fill="#808080"/>
<rect x="378" y="657" width="1" height="2" fill="#808080"/>
<rect x="395" y="657" width="1" height="2" fill="#808080"/>
<rect x="413" y="657" width="1" height="4" fill="#808080"/>
<rect x="431" y="657" width="1" height="2" fill="#808080"/>
<rect x="448" y="657" width="1" height="2" fill="#808080"/>
<rect x="466" y="657" width="1" height="2" fill="#808080"/>
<rect x="484" y="657" width="1" height="4" fill="#808080"/>
<rect x="501" y="657" width="1" height="2" fill="#808080"/>
<rect x="519" y="657" width="1" height="2" fill="#808080"/>
<rect x="536" y="657" width="1" height="2" fill="#808080"/>
<rect x="554" y="657" width="1" height="4" fill="#808080"/>
<rect x="572" y="657" width="1" height="2" fill="#808080"/>
<rect x="589" y="657" width="1" height="2" fill="#808080"/>
<rect x="607" y="657" width="1" height="2" fill="#808080"/>
<rect x="625" y="657" width="1" height="4" fill="#808080"/>
<rect x="642" y="657" width="1" height="2" fill="#808080"/>
<rect x="660" y="657" width="1" height="2" fill="#808080"/>
<rect x="677" y="657" width="1" height="2" fill="#808080"/>
<rect x="695" y="657" width="1" height="4" fill="#808080"/>
<rect x="713" y="657" width="1" height="2" fill="#808080"/>
<rect x="730" y="657" width="1" height="2" fill="#808080"/>
<rect x="748" y="657" width="1" height="2" fill="#808080"/>
<rect x="766" y="657" width="1" height="4" fill="#808080"/>
<rect x="783" y="657" width="1" height="2" fill="#808080"/>
<rect x="801" y="657" width="1" height="2" fill="#808080"/>
<rect x="818" y="657" width="1" height="2" fill="#808080"/>
<rect x="836" y="657" width="1" height="4" fill="#808080"/>
<rect x="854" y="657" width="1" height="2" fill="#808080"/>
<rect x="871" y="657" width="1" height="2" fill="#808080"/>
<rect x="889" y="657" width="1" height="2" fill="#808080"/>
<rect x="907" y="657" width="1" height="4" fill="#808080"/>
<rect x="924" y="657" width="1" height="2" fill="#808080"/>
<rect x="942" y="657" width="1" height="2" fill="#808080"/>
<rect x="959" y="657" width="1" height="2" fill="#808080"/>
<rect x="977" y="657" width="1" height="4" fill="#808080"/>
<rect x="995" y="657" width="1" height="2" fill="#808080"/>
<rect x="1012" y="657" width="1" height="2" fill="#808080"/>
<rect x="1030" y="657" width="1" height="2" fill="#808080"/>
<rect x="1048" y="657" width="1" height="4" fill="#808080"/>
<rect x="1065" y="657" width="1" height="2" fill="#808080"/>
<rect x="1083" y="657" width="1" height="2" fill="#808080"/>
<rect x="1100" y="657" width="1" height="2" fill="#808080"/>
<rect x="1118" y="657" width="1" height="4" fill="#808080"/>
<rect x="1136" y="657" width="1" height="2" fill="#808080"/>
<rect x="1153" y="657" width="1" height="2" fill="#808080"/>
<rect x="1171" y="657" width="1" height="2" fill="#808080"/>
<rect x="1189" y="657" width="1" height="4" fill="#808080"/>
<rect x="1206" y="657" width="1" height="2" fill="#808080"/>
<text x="61.5" y="674" font-size="11" letter-spacing="-0.28" text-anchor="middle">00.000</text>
<text x="131.5" y="674" font-size="11" letter-spacing="-0.28" text-anchor="middle">02.000</text>
<text x="202.5" y="674" font-size="11" letter-spacing="-0.28" text-anchor="middle">04.000</text>
<text x="272.5" y="674" font-size="11" letter-spacing="-0.28" text-anchor="middle">06.000</text>
<text x="343.5" y="674" font-size="11" letter-spacing="-0.28" text-anchor="middle">08.000</text>
<text x="413.5" y="674" font-size="11" letter-spacing="-0.28" text-anchor="middle">10.000</text>
<text x="484.5" y="674" font-size="11" letter-spacing="-0.28" text-anchor="middle">12.000</text>
<text x="554.5" y="674" font-size="11" letter-spacing="-0.28" text-anchor="middle">14.000</text>
<text x="625.5" y="674" font-size="11" letter-spacing="-0.28" text-anchor="middle">16.000</text>
<text x="695.5" y="674" font-size="11" letter-spacing="-0.28" text-anchor="middle">18.000</text>
<text x="766.5" y="674" font-size="11" letter-spacing="-0.28" text-anchor="middle">20.000</text>
<text x="836.5" y="674" font-size="11" letter-spacing="-0.28" text-anchor="middle">22.000</text>
<text x="907.5" y="674" font-size="11" letter-spacing="-0.28" text-anchor="middle">24.000</text>
<text x="977.5" y="674" font-size="11" letter-spacing="-0.28" text-anchor="middle">26.000</text>
<text x="1048.5" y="674" font-size="11" letter-spacing="-0.28" text-anchor="middle">28.000</text>
<text x="1118.5" y="674" font-size="11" letter-spacing="-0.28" text-anchor="middle">30.000</text>
<text x="1189.5" y="674" font-size="11" letter-spacing="-0.28" text-anchor="middle">32.000</text>
<polyline points="61.0,594.4 73.3,594.4 75.2,619.3 77.0,619.3 80.2,594.4 946.0,594.4 965.0,619.6 968.3,643.2 1112.7,643.2 1114.0,619.6 1117.3,594.4 1131.7,594.4 1133.6,619.6 1175.0,619.6 1177.0,594.4 1205.0,594.4" fill="none" stroke="#ff0000" stroke-width="1"/>
<polyline points="62.0,594.4 73.3,594.4 73.3,594.4" fill="none" stroke="#800000" stroke-width="1.4"/>
<polyline points="62.0,594.4 73.3,594.4 73.3,594.4" fill="none" stroke="#800000" stroke-width="3" stroke-dasharray="3.5,1" stroke-linejoin="round"/>
<polyline points="80.2,594.4 80.2,594.4 946.0,594.4 946.0,594.4" fill="none" stroke="#800000" stroke-width="1.4"/>
<polyline points="80.2,594.4 80.2,594.4 946.0,594.4 946.0,594.4" fill="none" stroke="#800000" stroke-width="3" stroke-dasharray="3.5,1" stroke-linejoin="round"/>
<polyline points="968.3,643.2 968.3,643.2 973.0,643.2" fill="none" stroke="#800000" stroke-width="1.4"/>
<polyline points="968.3,643.2 968.3,643.2 973.0,643.2" fill="none" stroke="#800000" stroke-width="3" stroke-dasharray="3.5,1" stroke-linejoin="round"/>
<polyline points="1099.0,643.2 1112.7,643.2 1112.7,643.2" fill="none" stroke="#800000" stroke-width="1.4"/>
<polyline points="1099.0,643.2 1112.7,643.2 1112.7,643.2" fill="none" stroke="#800000" stroke-width="3" stroke-dasharray="3.5,1" stroke-linejoin="round"/>
<polyline points="1117.3,594.4 1117.3,594.4 1131.7,594.4 1131.7,594.4" fill="none" stroke="#800000" stroke-width="1.4"/>
<polyline points="1117.3,594.4 1117.3,594.4 1131.7,594.4 1131.7,594.4" fill="none" stroke="#800000" stroke-width="3" stroke-dasharray="3.5,1" stroke-linejoin="round"/>
<polyline points="1133.6,619.6 1133.6,619.6 1175.0,619.6 1175.0,619.6" fill="none" stroke="#800000" stroke-width="1.4"/>
<polyline points="1133.6,619.6 1133.6,619.6 1175.0,619.6 1175.0,619.6" fill="none" stroke="#800000" stroke-width="3" stroke-dasharray="3.5,1" stroke-linejoin="round"/>
<polyline points="1177.0,594.4 1177.0,594.4 1205.0,594.4" fill="none" stroke="#800000" stroke-width="1.4"/>
<polyline points="1177.0,594.4 1177.0,594.4 1205.0,594.4" fill="none" stroke="#800000" stroke-width="3" stroke-dasharray="3.5,1" stroke-linejoin="round"/>
<rect x="73.0" y="617.8" width="3" height="3" fill="#800000"/>
<rect x="75.5" y="617.8" width="3" height="3" fill="#800000"/>
<rect x="963.5" y="618.1" width="3" height="3" fill="#800000"/>
<rect x="1071.5" y="641.7" width="3" height="3" fill="#800000"/>
<rect x="1112.5" y="618.1" width="3" height="3" fill="#800000"/>
<rect x="1115.8" y="592.9" width="3" height="3" fill="#800000"/>
<rect x="60" y="577" width="1" height="80" fill="#000090"/>
<rect x="61" y="575" width="1" height="1" fill="#000090"/>
<rect x="61" y="576" width="1" height="81" fill="#6060ff"/>
<line x1="61.5" y1="577" x2="61.5" y2="656" stroke="#c8c800" stroke-dasharray="3,3"/>
<rect x="62" y="577" width="1" height="80" fill="#0060ff"/>
<rect x="60" y="576" width="3" height="1" fill="#e0e040"/><rect x="60" y="656" width="3" height="1" fill="#ffff80"/>
<rect x="60" y="592.9" width="3" height="3" fill="#70e070"/>
</svg>
</body></html>
